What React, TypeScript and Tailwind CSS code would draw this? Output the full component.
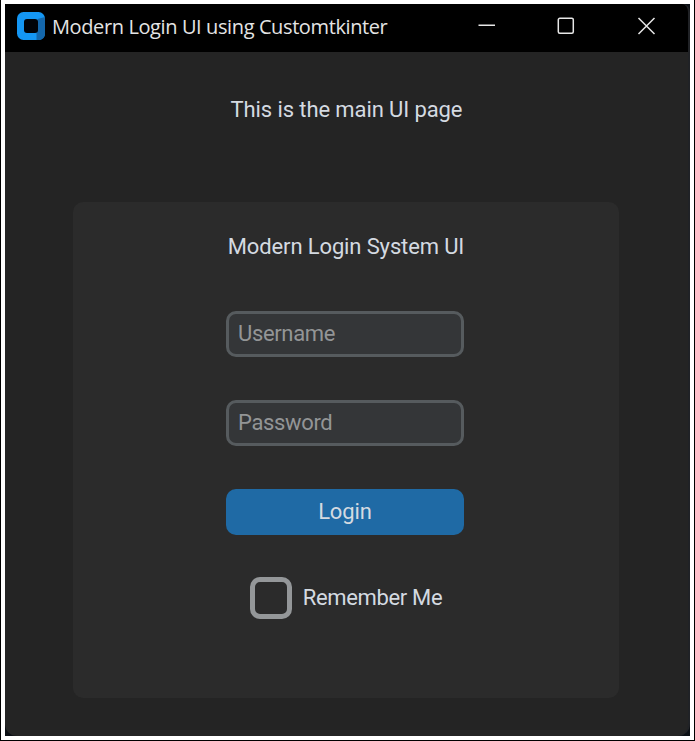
import React from "react";

function Logo() {
  return (
    <svg width="28" height="28" viewBox="0 0 28 28" className="shrink-0">
      <rect x="0" y="0" width="28" height="28" rx="6.5" fill="#1496f3" />
      <path d="M20.500 7 L28 5 V21.500 Q28 28 21.500 28 L19.500 28 V21 Z" fill="#1467ab" />
      <rect x="7" y="7" width="14" height="14" rx="3" fill="#000308" />
    </svg>
  );
}

function TitleBar() {
  return (
    <header className="flex h-12 shrink-0 items-start bg-black pl-3 text-[#e4e4e4]">
      <div className="pt-2">
        <Logo />
      </div>
      <h1 className="ml-[7px] mt-[7px] w-[429px] whitespace-nowrap font-['Open_Sans','Noto_Sans',sans-serif] text-[20px] leading-8 tracking-[-0.39px]">
        Modern Login UI using Customtkinter
      </h1>
      <svg width="180" height="20" viewBox="0 0 180 20" fill="none" stroke="#e8e8e8" strokeWidth="1.5" className="mt-3 -ml-[3px] shrink-0">
        <path d="M0.500 9.200H17" />
        <rect x="80.300" y="2.300" width="15" height="15" rx="1.500" />
        <path d="M160.500 2L176.500 18M176.500 2L160.500 18" />
      </svg>
    </header>
  );
}

function Field({ label, type }: { label: string; type: string }) {
  return (
    <input
      type={type}
      placeholder={label}
      className="block h-[46px] w-[238px] rounded-[10px] border-[3px] border-[#565b5e] bg-[#343638] px-[9px] pb-px text-[22px] tracking-[-0.35px] placeholder:text-[#939596]"
    />
  );
}

export default function App() {
  return (
    <div className="h-[741px] w-[695px] border-x border-b border-black bg-white px-1 pt-1 pb-1">
      <div className="bg-[#0b0f14]">
        <main className="flex h-[732px] w-[685px] flex-col overflow-hidden rounded-b-[12px] rounded-tr-[8px] border-r-2 border-[#202226] bg-[#242424] font-[Roboto,sans-serif] text-[22px] leading-[26px] tracking-[-0.1px] text-[#d4dae1]">
          <TitleBar />
          <p className="mt-[45px] text-center">This is the main UI page</p>
          <section className="ml-[68px] mt-[79px] flex h-[496px] w-[546px] flex-col items-center rounded-[10px] bg-[#2b2b2b]">
            <h2 className="mt-[32px] tracking-[-0.13px]">Modern Login System UI</h2>
            <form className="mr-[2px] mt-[51px] flex flex-col items-center">
              <Field label="Username" type="text" />
              <div className="h-[43px]" />
              <Field label="Password" type="password" />
              <button type="button" className="mt-[43px] h-[46px] w-[238px] rounded-[10px] bg-[#1f6aa5]">
                Login
              </button>
              <label className="ml-[2px] mt-[42px] flex items-center gap-[11px]">
                <span className="h-[42px] w-[42px] rounded-[10px] border-[5px] border-[#949799]" />
                <span className="tracking-[-0.35px]">Remember Me</span>
              </label>
            </form>
          </section>
        </main>
      </div>
    </div>
  );
}
